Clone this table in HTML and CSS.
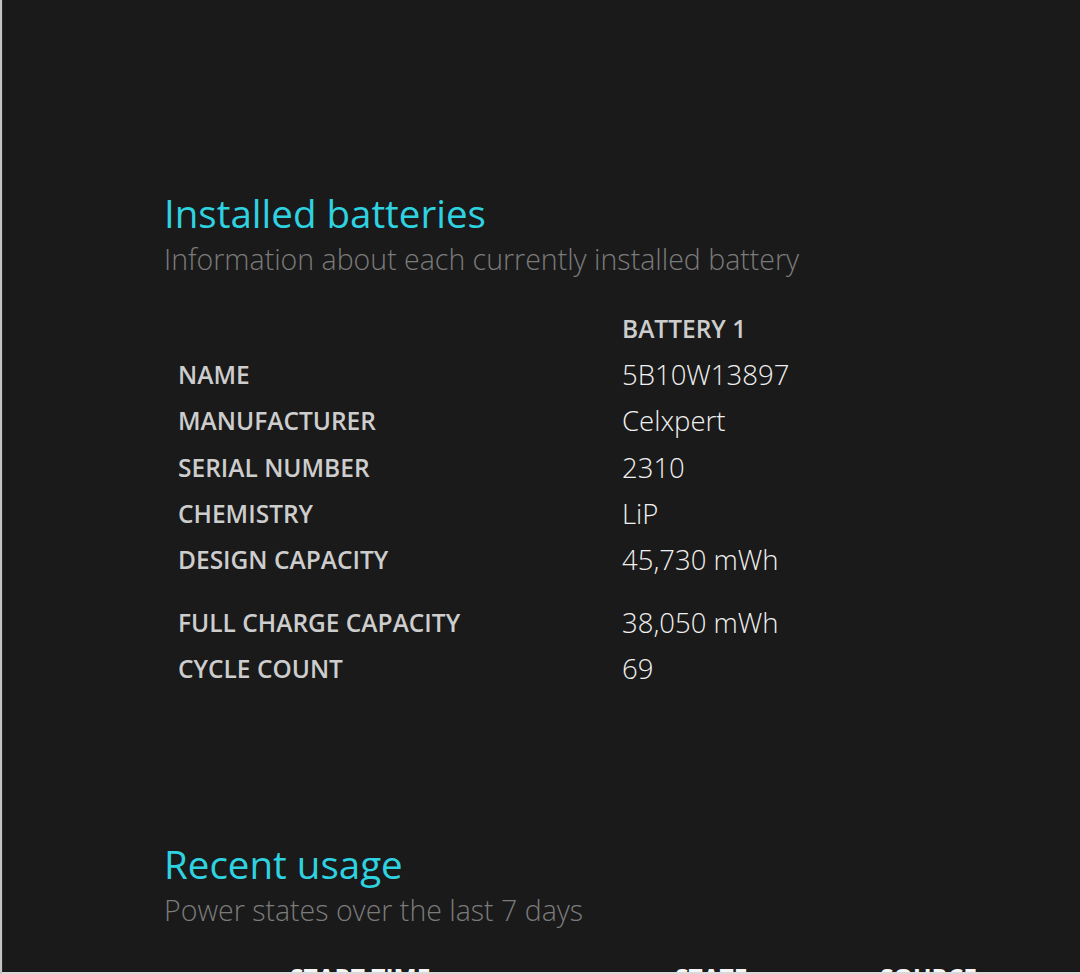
FILE: index.html
```html
<!DOCTYPE html>
<html lang="en">
<head>
<meta charset="utf-8">
<title>Battery report</title>
<link rel="stylesheet" href="styles.css">
</head>
<body>
<div class="window">
  <main class="page">
    <section class="section batteries">
      <h2 class="title">Installed batteries</h2>
      <p class="sub">Information about each currently installed battery</p>
      <table class="info">
        <thead>
          <tr><th class="label"></th><th class="colhead">BATTERY 1</th></tr>
        </thead>
        <tbody>
          <tr><td class="label">NAME</td><td class="value">5B10W13897</td></tr>
          <tr><td class="label">MANUFACTURER</td><td class="value">Celxpert</td></tr>
          <tr><td class="label">SERIAL NUMBER</td><td class="value">2310</td></tr>
          <tr><td class="label">CHEMISTRY</td><td class="value">LiP</td></tr>
          <tr><td class="label">DESIGN CAPACITY</td><td class="value">45,730 mWh</td></tr>
          <tr class="spacer"><td></td><td></td></tr>
          <tr><td class="label">FULL CHARGE CAPACITY</td><td class="value">38,050 mWh</td></tr>
          <tr><td class="label">CYCLE COUNT</td><td class="value">69</td></tr>
        </tbody>
      </table>
    </section>
    <section class="section usage">
      <h2 class="title">Recent usage</h2>
      <p class="sub">Power states over the last 7 days</p>
      <table class="usage-table">
        <colgroup>
          <col class="w-start"><col class="w-state"><col class="w-source"><col class="w-cap">
        </colgroup>
        <thead>
          <tr><th class="c-start">START TIME</th><th>STATE</th><th>SOURCE</th><th>CAPACITY REMAINING</th></tr>
        </thead>
      </table>
    </section>
  </main>
  <div class="frame-bottom"></div>
</div>
</body>
</html>
```
FILE: styles.css
```css
html, body {
  margin: 0;
  padding: 0;
  height: 974px;
  overflow: hidden;
  background: #1a1a1a;
}

.window {
  height: 974px;
  display: flex;
  flex-direction: column;
  border-left: 2px solid #c4c4c4;
  box-sizing: border-box;
}

.page {
  flex: 1;
  overflow: hidden;
  background: #1a1a1a;
  border-left: 1px solid #2a2a2a;
  padding: 191px 0 0 161px;
  font-family: "Open Sans", "Noto Sans", sans-serif;
}

.frame-bottom {
  height: 2px;
  background: #d9d9d9;
}

.title {
  margin: 0;
  font-size: 38.5px;
  line-height: 44px;
  font-weight: 400;
  color: #2fd2e0;
}

.sub {
  margin: 7px 0 0;
  font-size: 28.5px;
  line-height: 34px;
  font-weight: 300;
  color: #7b7b7b;
}

.info {
  margin-top: 30px;
  border-collapse: collapse;
}

.info th, .info td {
  padding: 0;
  height: 46.2px;
  line-height: 34px;
  vertical-align: middle;
  text-align: left;
}

.label {
  width: 444px;
  padding-left: 14px !important;
  font-size: 24.5px;
  font-weight: 600;
  color: #cdcdcd;
}

.colhead {
  font-size: 24.5px;
  font-weight: 600;
  color: #cdcdcd;
}

.value {
  font-size: 27.5px;
  font-weight: 300;
  color: #f0f0f0;
}

.info .spacer td {
  height: 16.8px;
}

.usage {
  margin-top: 150px;
}

.usage-table {
  margin-top: 28px;
  border-collapse: collapse;
  table-layout: fixed;
  width: 1200px;
}

.w-start { width: 511px; }
.w-state { width: 205px; }
.w-source { width: 200px; }
.w-cap { width: 284px; }

.usage-table th {
  padding: 0;
  height: 46px;
  line-height: 46px;
  text-align: left;
  white-space: nowrap;
  font-size: 24.5px;
  font-weight: 700;
  color: #f5f5f5;
}

.usage-table .c-start {
  padding-left: 126px;
}
```
